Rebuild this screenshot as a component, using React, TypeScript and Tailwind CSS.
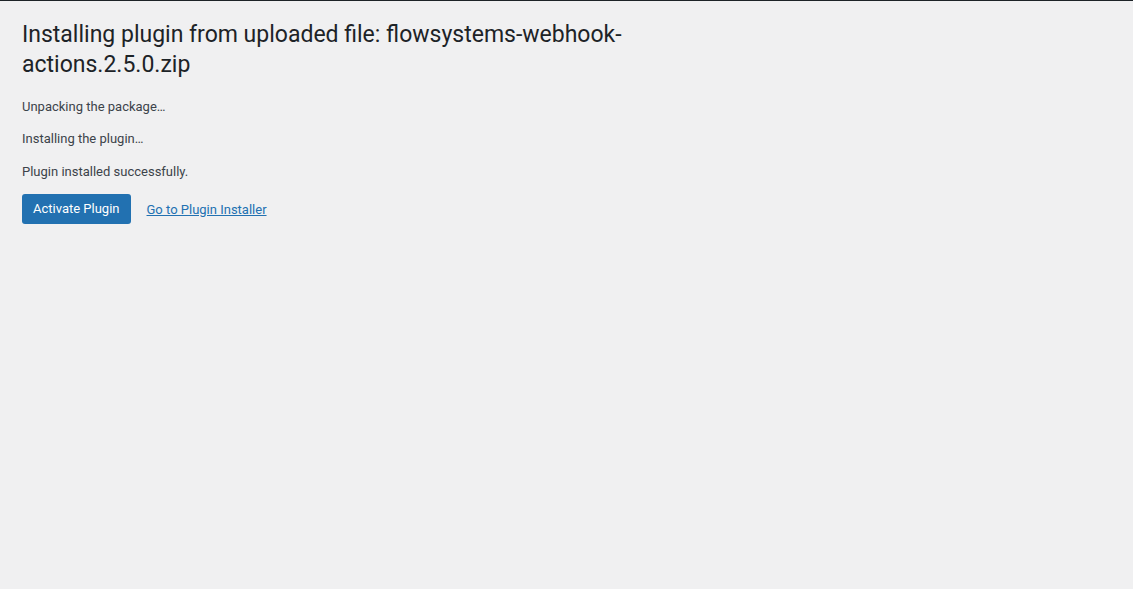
export default function App() {
  return (
    <div
      className="min-h-[589px] w-full bg-[#f0f0f1] border-t border-[#1d2327] text-[13px] text-[#3c434a]"
      style={{ fontFamily: "Roboto, 'Liberation Sans', sans-serif" }}
    >
      <div className="pl-[22px] pt-[10px]">
        <h1 className="max-w-[640px] pt-[9px] pb-[4px] text-[23px] font-normal leading-[1.3] text-[#1d2327]">
          Installing plugin from uploaded file: flowsystems-webhook-actions.2.5.0.zip
        </h1>
        <p className="my-[13px] leading-[1.5]">Unpacking the package…</p>
        <p className="my-[13px] leading-[1.5]">Installing the plugin…</p>
        <p className="my-[13px] leading-[1.5]">Plugin installed successfully.</p>
        <div className="flex items-center gap-4 mt-[13px]">
          <button className="h-[30px] px-[11px] rounded-[3px] bg-[#2271b1] text-white text-[13px] leading-[28px]">
            Activate Plugin
          </button>
          <a href="#" className="text-[#2271b1] underline">
            Go to Plugin Installer
          </a>
        </div>
      </div>
    </div>
  );
}
